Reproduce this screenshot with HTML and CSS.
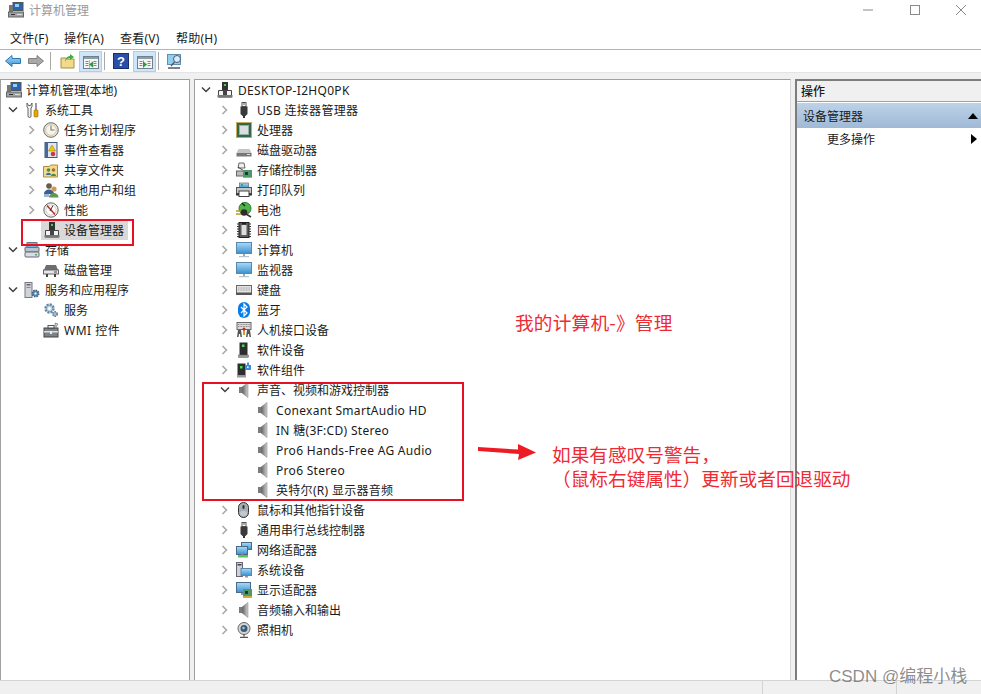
FILE: index.html
```html
<!DOCTYPE html>
<html lang="zh-CN">
<head>
<meta charset="utf-8">
<title>计算机管理</title>
<link rel="stylesheet" href="styles.css">
</head>
<body>
<svg class="defs" xmlns="http://www.w3.org/2000/svg">
<defs>
<linearGradient id="gb" x1="0" y1="0" x2="0" y2="1"><stop offset="0" stop-color="#a9dcf7"/><stop offset="1" stop-color="#3c8fd0"/></linearGradient>
<linearGradient id="gs" x1="0" y1="0" x2="1" y2="0"><stop offset="0" stop-color="#5e5e5e"/><stop offset="1" stop-color="#d0d0d0"/></linearGradient>
<symbol id="i-mgmt" viewBox="0 0 16 16"><rect x="5" y="0.500" width="10" height="8" fill="#2a62b8" stroke="#555"/><rect x="7" y="2" width="4" height="3" fill="#8fd0f5"/><rect x="1" y="3" width="4" height="8" fill="#777"/><rect x="0.500" y="10" width="15" height="5" fill="#9aa3a8" stroke="#666"/><rect x="3" y="12" width="4" height="1" fill="#333"/><rect x="9" y="12" width="5" height="1" fill="#ddd"/></symbol>
<symbol id="i-tools" viewBox="0 0 16 16"><path d="M3 1v4l1 1v8a1.500 1.500 0 0 0 3 0V6l1-1V1L6.500 3.500h-2z" fill="#eee" stroke="#555" stroke-width=".9"/><rect x="11" y="1" width="2" height="7" fill="#999"/><rect x="10" y="8" width="4" height="7" rx="1" fill="#e8a800" stroke="#8a6400" stroke-width=".6"/></symbol>
<symbol id="i-clock" viewBox="0 0 16 16"><circle cx="8" cy="8" r="7.300" fill="#ece7d6" stroke="#6c6c6c"/><circle cx="8" cy="8" r="5.300" fill="#f8f5e8" stroke="#b8b098" stroke-width=".6"/><path d="M8 3.500V8h3.500" fill="none" stroke="#777" stroke-width="1.100"/></symbol>
<symbol id="i-event" viewBox="0 0 16 16"><rect x="2" y="0.500" width="12" height="15" fill="#dfe6f0" stroke="#44597f"/><rect x="2" y="0.500" width="3" height="15" fill="#44699f"/><path d="M9 3l3.500 6h-7z" fill="#f2c811" stroke="#8c7100" stroke-width=".5"/><circle cx="10" cy="12" r="2.300" fill="#c8384a"/></symbol>
<symbol id="i-share" viewBox="0 0 16 16"><path d="M.5 4.500V15h14V3h-7l-1 1.500z" fill="#f3d98d" stroke="#a98f3f"/><circle cx="5.500" cy="8" r="1.800" fill="#4c8a3c"/><path d="M3 13c0-3 5-3 5 0z" fill="#3c6fa0"/><circle cx="10.500" cy="8" r="1.800" fill="#a56a3c"/><path d="M8 14c0-3 5-3 5 0z" fill="#4c8a3c"/></symbol>
<symbol id="i-users" viewBox="0 0 16 16"><circle cx="6" cy="4" r="2.800" fill="#6c5a48"/><path d="M1 12c0-6 10-6 10 0z" fill="#3d5f8e"/><circle cx="11" cy="7" r="2.600" fill="#c99a60"/><path d="M6 15.500c0-6 9.500-6 9.500 0z" fill="#5f9a4a"/><rect x="1" y="12" width="5" height="3" fill="#9ab6d4"/></symbol>
<symbol id="i-perf" viewBox="0 0 16 16"><circle cx="8" cy="8" r="7.200" fill="#f4f0e6" stroke="#666"/><circle cx="8" cy="8" r="5" fill="#fff" stroke="#aaa" stroke-width=".5"/><path d="M4 3.500l8 9" stroke="#c8242c" stroke-width="1.500"/><path d="M10 3.500 7 9" stroke="#333" stroke-width="1"/></symbol>
<symbol id="i-host" viewBox="0 0 16 16"><rect x="5" y="0" width="6" height="9" fill="#333"/><rect x="7" y="2" width="2" height="2" fill="#3fd44a"/><path d="M1.500 8.500h13v6.500h-13z" fill="#f4f4f4" stroke="#444"/><rect x="0.500" y="13" width="15" height="2.500" fill="#777"/><rect x="6" y="8" width="4" height="5" fill="#444"/></symbol>
<symbol id="i-storage" viewBox="0 0 16 16"><rect x="1" y="5" width="14" height="5" rx="1" fill="#b8c4cf" stroke="#667"/><rect x="1" y="10" width="14" height="5" rx="1" fill="#d8dfe4" stroke="#667"/><rect x="3" y="0.500" width="10" height="5" fill="#6fb4dc" stroke="#678"/><rect x="11" y="12" width="2" height="1.500" fill="#3fb04a"/></symbol>
<symbol id="i-disk" viewBox="0 0 16 16"><path d="M3 3h10l2 5H1z" fill="#6e6e6e"/><rect x="0.500" y="8" width="15" height="4" fill="#e8e8e8" stroke="#666"/><path d="M3 12h2v3H3zM11 12h2v3h-2z" fill="#444"/><rect x="11" y="9.500" width="3" height="1" fill="#444"/></symbol>
<symbol id="i-svc" viewBox="0 0 16 16"><rect x="1" y="0.500" width="7" height="15" fill="#d0d4d8" stroke="#778"/><rect x="2.500" y="2" width="4" height="1.500" fill="#666"/><rect x="2.500" y="5" width="4" height="1" fill="#888"/><circle cx="11.500" cy="11.500" r="3" fill="#6f94b8" stroke="#3c5f80" stroke-width="2" stroke-dasharray="1.500 .8"/><circle cx="11.500" cy="11.500" r="1" fill="#fff"/></symbol>
<symbol id="i-gear" viewBox="0 0 16 16"><circle cx="6.500" cy="6.500" r="4" fill="#b9cfe0" stroke="#5f84a4" stroke-width="2.400" stroke-dasharray="2 1.100"/><circle cx="6.500" cy="6.500" r="1.500" fill="#fff"/><circle cx="12" cy="12" r="2.200" fill="#a8bccc" stroke="#64809a" stroke-width="1.600" stroke-dasharray="1.400 .8"/></symbol>
<symbol id="i-wmi" viewBox="0 0 16 16"><rect x="1" y="6" width="14" height="9" fill="#7c8289" stroke="#444"/><rect x="1" y="9" width="14" height="1.500" fill="#ddd"/><rect x="5" y="3.500" width="6" height="3" fill="none" stroke="#555"/><path d="M12 1l3 1-3 5z" fill="#ccc" stroke="#555" stroke-width=".5"/><rect x="7" y="9" width="2" height="3" fill="#eee"/></symbol>
<symbol id="i-usb" viewBox="0 0 16 16"><rect x="6" y="0.500" width="4" height="4" fill="#fff" stroke="#555"/><rect x="7" y="1.500" width="2" height="1" fill="#555"/><path d="M4.500 4.500h7V12l-2 2h-3l-2-2z" fill="#3a3a3a"/><rect x="7" y="14" width="2" height="2" fill="#333"/></symbol>
<symbol id="i-cpu" viewBox="0 0 16 16"><rect x="0" y="0" width="16" height="16" fill="#c7a860"/><rect x="1" y="1" width="14" height="14" fill="#2f6a45"/><rect x="3.500" y="3.500" width="9" height="9" fill="#d9dee0" stroke="#9aa"/></symbol>
<symbol id="i-hdd" viewBox="0 0 16 16"><path d="M2.500 7h11l2 4h-15z" fill="#c4c4c4"/><rect x="0.500" y="11" width="15" height="3.500" fill="#777"/><rect x="11" y="12" width="3" height="1" fill="#e0e0e0"/></symbol>
<symbol id="i-sctrl" viewBox="0 0 16 16"><path d="M3 1h5l1 5H2z" fill="#eee" stroke="#444" stroke-width=".8"/><path d="M2 5l6 4" stroke="#444"/><rect x="0.500" y="9" width="9" height="5" fill="#bbb" stroke="#666"/><rect x="7" y="8" width="9" height="7" fill="#4d9a66"/><rect x="9" y="10" width="3" height="3" fill="#234"/><rect x="7" y="15" width="9" height="1" fill="#d2a83a"/></symbol>
<symbol id="i-print" viewBox="0 0 16 16"><rect x="3.500" y="1" width="9" height="5" fill="url(#gb)" stroke="#555" stroke-width=".6"/><path d="M5 2h2v2H5z" fill="#4fa04f"/><rect x="0.500" y="5.500" width="15" height="6" fill="#c4c8cc" stroke="#555"/><rect x="3" y="9" width="10" height="5.500" fill="#fff" stroke="#444"/><rect x="0" y="11.500" width="3" height="2" fill="#333"/><rect x="13" y="11.500" width="3" height="2" fill="#333"/></symbol>
<symbol id="i-batt" viewBox="0 0 16 16"><circle cx="9" cy="6.500" r="6" fill="#4fb44a" stroke="#267a2a"/><path d="M6 1l3 3" stroke="#222" stroke-width="1.500"/><path d="M0 9h5M0 12h5" stroke="#b89a30" stroke-width="1.300"/><circle cx="8" cy="10.500" r="3.300" fill="#2d2d2d"/><path d="M10 12l5 3" stroke="#333" stroke-width="1.500"/></symbol>
<symbol id="i-chip" viewBox="0 0 16 16"><rect x="3" y="0.500" width="10" height="15" fill="#5a5a5a" stroke="#222"/><rect x="5.500" y="3" width="5" height="10" fill="#ddd"/><path d="M1 2h2M1 4.500h2M1 7h2M1 9.500h2M1 12h2M1 14.500h2M13 2h2M13 4.500h2M13 7h2M13 9.500h2M13 12h2M13 14.500h2" stroke="#333"/><path d="M6 .5h4v2H6z" fill="#222"/></symbol>
<symbol id="i-pc" viewBox="0 0 16 16"><rect x="0.500" y="0.500" width="15" height="11" fill="url(#gb)" stroke="#5c87ad"/><rect x="7" y="12" width="2" height="2" fill="#9ab"/><rect x="3" y="14" width="10" height="1.200" fill="#b8c4cc"/></symbol>
<symbol id="i-kbd" viewBox="0 0 16 16"><rect x="0.500" y="3.500" width="15" height="9" fill="#e4e4e4" stroke="#666"/><path d="M2 6h12M2 8h12" stroke="#9a9a9a" stroke-dasharray="1 .6"/><rect x="0.500" y="10.500" width="15" height="2.500" fill="#555"/></symbol>
<symbol id="i-bt" viewBox="0 0 16 16"><rect x="2" y="0" width="12" height="16" rx="6" fill="#0a7ce8"/><path d="M5 5l6 6-3 3V2l3 3-6 6" fill="none" stroke="#fff" stroke-width="1.200"/></symbol>
<symbol id="i-hid" viewBox="0 0 16 16"><rect x="1" y="0.500" width="14" height="7" fill="#dcdcdc" stroke="#666"/><path d="M2 2.500h12M2 4.500h12" stroke="#888" stroke-dasharray="1 .6"/><path d="M1 15l1-7h3l1 7H4.500L4 12H3l-.5 3z" fill="#555"/><path d="M10 15l1-7h3l1 7h-1.500L13 12h-1l-.5 3z" fill="#555"/><rect x="7" y="7" width="2" height="6" fill="#c8a040"/><circle cx="8" cy="7" r="1.500" fill="#c23"/></symbol>
<symbol id="i-sw" viewBox="0 0 16 16"><rect x="3.500" y="0.500" width="8" height="14" fill="#2e2e2e"/><rect x="6" y="2.500" width="2.500" height="2.500" fill="#3fe04a"/><rect x="2.500" y="13" width="10" height="2.500" fill="#9a9a9a" stroke="#666" stroke-width=".5"/></symbol>
<symbol id="i-swc" viewBox="0 0 16 16"><rect x="1.500" y="1.500" width="8" height="13" fill="#2e2e2e"/><rect x="4" y="4" width="2.500" height="2.500" fill="#3fe04a"/><rect x="1" y="13" width="9" height="2.500" fill="#9a9a9a"/><rect x="9" y="3" width="6" height="5" fill="#3f8fd8"/><rect x="11" y="0.500" width="2" height="3" fill="#3f8fd8"/><rect x="11" y="4.500" width="1.500" height="1.500" fill="#fff"/></symbol>
<symbol id="i-spk" viewBox="0 0 16 16"><rect x="3" y="5" width="3.200" height="6" fill="#7a7a7a"/><path d="M6 5l6-4.500v15L6 11z" fill="url(#gs)" stroke="#808080" stroke-width=".5"/></symbol>
<symbol id="i-mouse" viewBox="0 0 16 16"><rect x="2.500" y="0.500" width="10" height="15" rx="5" fill="#a5adb5" stroke="#333"/><rect x="6.500" y="3" width="2" height="4" rx="1" fill="#333"/><rect x="4" y="9" width="7" height="5" rx="2.500" fill="#c4c9ce"/></symbol>
<symbol id="i-net" viewBox="0 0 16 16"><rect x="5.500" y="0.500" width="10" height="7" fill="url(#gb)" stroke="#4a6a8a"/><rect x="0.500" y="4.500" width="11" height="8" fill="url(#gb)" stroke="#4a6a8a"/><rect x="2" y="13" width="10" height="2.500" fill="#58c558"/><rect x="5" y="12" width="2" height="2" fill="#88a"/></symbol>
<symbol id="i-sys" viewBox="0 0 16 16"><rect x="0.500" y="0.500" width="6" height="14" fill="#ced2d6" stroke="#667"/><rect x="1.500" y="2" width="4" height="1.500" fill="#444"/><rect x="5" y="6.500" width="10.500" height="7" fill="url(#gb)" stroke="#5c87ad"/><rect x="9" y="14" width="3" height="1.500" fill="#89a"/></symbol>
<symbol id="i-disp" viewBox="0 0 16 16"><rect x="0.500" y="0.500" width="14" height="10" fill="url(#gb)" stroke="#4a6a8a"/><rect x="5" y="11" width="4" height="2" fill="#89a"/><rect x="7" y="7" width="9" height="7" fill="#4d9a66"/><rect x="9" y="9" width="3" height="3" fill="#234"/><rect x="7" y="14" width="9" height="2" fill="#d2a83a"/></symbol>
<symbol id="i-cam" viewBox="0 0 16 16"><circle cx="8" cy="6.500" r="6" fill="#d6d6d6" stroke="#666"/><circle cx="8" cy="6.500" r="3.500" fill="#3c5a78"/><circle cx="7.500" cy="6" r="1.300" fill="#9cc4e4"/><path d="M8 12.500v2M4 15.500h8" stroke="#555" stroke-width="1.300"/></symbol>
<symbol id="i-right" viewBox="0 0 8 10"><path d="M1.500 1l4 4-4 4" fill="none" stroke="#a6a6a6" stroke-width="1.500"/></symbol>
<symbol id="i-down" viewBox="0 0 10 8"><path d="M1 1.500l4 4 4-4" fill="none" stroke="#404040" stroke-width="1.500"/></symbol>
<symbol id="i-pane" viewBox="0 0 16 13"><rect x="0.500" y="0.500" width="15" height="12" fill="#f6f6f6" stroke="#70808c"/><rect x="1" y="1" width="14" height="2" fill="#8e9ca6"/><path d="M2.500 5.500h3M2.500 7.500h3M2.500 9.500h3M10.500 5.500h3M10.500 7.500h3M10.500 9.500h3" stroke="#7a8894"/><path d="M6.500 4v8" stroke="#b0bac2"/></symbol>
</defs>
</svg>

<div class="window">
  <header class="titlebar">
    <div class="title-left">
      <svg class="ic"><use href="#i-mgmt"/></svg>
      <span class="title-text">计算机管理</span>
    </div>
    <div class="winctrl">
      <svg class="wc" viewBox="0 0 12 12"><path d="M1 6h10" stroke="#8a8a8a"/></svg>
      <svg class="wc wc-max" viewBox="0 0 12 12"><rect x="1.500" y="1.500" width="9" height="9" fill="none" stroke="#8a8a8a"/></svg>
      <svg class="wc" viewBox="0 0 12 12"><path d="M1 1l10 10M11 1L1 11" stroke="#8a8a8a"/></svg>
    </div>
  </header>

  <nav class="menubar">
    <span class="menu menu-first">文件(F)</span>
    <span class="menu">操作(A)</span>
    <span class="menu">查看(V)</span>
    <span class="menu">帮助(H)</span>
  </nav>

  <div class="toolbar">
    <svg class="tool" viewBox="0 0 16 16"><path d="M.5 8L7 2.500V5.500h8.500v5H7v3z" fill="url(#gb)" stroke="#2a79b8"/></svg>
    <svg class="tool tool-fwd" viewBox="0 0 16 16"><path d="M15.500 8L9 2.500V5.500H.5v5H9v3z" fill="#a8a8a8" stroke="#808080"/></svg>
    <span class="tsep tsep-a"></span>
    <svg class="tool tool-up" viewBox="0 0 16 16"><path d="M1 5h5l1 1h7v9H1z" fill="#f3d98d" stroke="#a98f3f"/><path d="M5 9c0-4 3-6 5-6V1l4 3-4 3V5c-2 0-4 1-5 4z" fill="#3fae3f"/></svg>
    <span class="tbtn"><svg class="pane-ic"><use href="#i-pane"/></svg><svg class="tri" viewBox="0 0 6 8"><path d="M5 0v8L0 4z" fill="#2f9a3f"/></svg></span>
    <span class="tsep tsep-b"></span>
    <svg class="tool tool-help" viewBox="0 0 16 16"><rect x="0.500" y="0.500" width="15" height="15" fill="#2a4fa8" stroke="#1a2f70"/><text x="8" y="13" class="qm">?</text></svg>
    <span class="tbtn tbtn-b"><svg class="pane-ic"><use href="#i-pane"/></svg><svg class="tri" viewBox="0 0 6 8"><path d="M0 0v8l5-4z" fill="#2f9a3f"/></svg></span>
    <span class="tsep tsep-c"></span>
    <svg class="tool tool-view" viewBox="0 0 16 16"><rect x="0.500" y="1.500" width="13" height="10" fill="#8fd0f0" stroke="#5f8fb0"/><circle cx="10" cy="6" r="3.500" fill="#d5eefa" stroke="#557"/><path d="M7.500 9L4 13M1 15h12" stroke="#556" stroke-width="1.300"/></svg>
  </div>

  <main class="panes">
    <section class="pane pane-left">
      <div class="row ind-l0"><svg class="ic"><use href="#i-mgmt"/></svg><span class="lbl">计算机管理(本地)</span></div>
      <div class="row ind-l1"><svg class="chev chev-d"><use href="#i-down"/></svg><svg class="ic"><use href="#i-tools"/></svg><span class="lbl">系统工具</span></div>
      <div class="row ind-l2"><svg class="chev"><use href="#i-right"/></svg><svg class="ic"><use href="#i-clock"/></svg><span class="lbl">任务计划程序</span></div>
      <div class="row ind-l2"><svg class="chev"><use href="#i-right"/></svg><svg class="ic"><use href="#i-event"/></svg><span class="lbl">事件查看器</span></div>
      <div class="row ind-l2"><svg class="chev"><use href="#i-right"/></svg><svg class="ic"><use href="#i-share"/></svg><span class="lbl">共享文件夹</span></div>
      <div class="row ind-l2"><svg class="chev"><use href="#i-right"/></svg><svg class="ic"><use href="#i-users"/></svg><span class="lbl">本地用户和组</span></div>
      <div class="row ind-l2"><svg class="chev"><use href="#i-right"/></svg><svg class="ic"><use href="#i-perf"/></svg><span class="lbl">性能</span></div>
      <div class="row ind-l2 nochev"><span class="selected"><svg class="ic"><use href="#i-host"/></svg><span class="lbl">设备管理器</span></span></div>
      <div class="row ind-l1"><svg class="chev chev-d"><use href="#i-down"/></svg><svg class="ic"><use href="#i-storage"/></svg><span class="lbl">存储</span></div>
      <div class="row ind-l2 nochev"><svg class="ic"><use href="#i-disk"/></svg><span class="lbl">磁盘管理</span></div>
      <div class="row ind-l1"><svg class="chev chev-d"><use href="#i-down"/></svg><svg class="ic"><use href="#i-svc"/></svg><span class="lbl">服务和应用程序</span></div>
      <div class="row ind-l2 nochev"><svg class="ic"><use href="#i-gear"/></svg><span class="lbl">服务</span></div>
      <div class="row ind-l2 nochev"><svg class="ic"><use href="#i-wmi"/></svg><span class="lbl wider">WMI 控件</span></div>
    </section>

    <section class="pane pane-center">
      <div class="row ind-c0"><svg class="chev chev-d"><use href="#i-down"/></svg><svg class="ic"><use href="#i-host"/></svg><span class="lbl wide">DESKTOP-I2HQ0PK</span></div>
      <div class="row ind-c1"><svg class="chev"><use href="#i-right"/></svg><svg class="ic"><use href="#i-usb"/></svg><span class="lbl wide">USB 连接器管理器</span></div>
      <div class="row ind-c1"><svg class="chev"><use href="#i-right"/></svg><svg class="ic"><use href="#i-cpu"/></svg><span class="lbl">处理器</span></div>
      <div class="row ind-c1"><svg class="chev"><use href="#i-right"/></svg><svg class="ic"><use href="#i-hdd"/></svg><span class="lbl">磁盘驱动器</span></div>
      <div class="row ind-c1"><svg class="chev"><use href="#i-right"/></svg><svg class="ic"><use href="#i-sctrl"/></svg><span class="lbl">存储控制器</span></div>
      <div class="row ind-c1"><svg class="chev"><use href="#i-right"/></svg><svg class="ic"><use href="#i-print"/></svg><span class="lbl">打印队列</span></div>
      <div class="row ind-c1"><svg class="chev"><use href="#i-right"/></svg><svg class="ic"><use href="#i-batt"/></svg><span class="lbl">电池</span></div>
      <div class="row ind-c1"><svg class="chev"><use href="#i-right"/></svg><svg class="ic"><use href="#i-chip"/></svg><span class="lbl">固件</span></div>
      <div class="row ind-c1"><svg class="chev"><use href="#i-right"/></svg><svg class="ic"><use href="#i-pc"/></svg><span class="lbl">计算机</span></div>
      <div class="row ind-c1"><svg class="chev"><use href="#i-right"/></svg><svg class="ic"><use href="#i-pc"/></svg><span class="lbl">监视器</span></div>
      <div class="row ind-c1"><svg class="chev"><use href="#i-right"/></svg><svg class="ic"><use href="#i-kbd"/></svg><span class="lbl">键盘</span></div>
      <div class="row ind-c1"><svg class="chev"><use href="#i-right"/></svg><svg class="ic"><use href="#i-bt"/></svg><span class="lbl">蓝牙</span></div>
      <div class="row ind-c1"><svg class="chev"><use href="#i-right"/></svg><svg class="ic"><use href="#i-hid"/></svg><span class="lbl">人机接口设备</span></div>
      <div class="row ind-c1"><svg class="chev"><use href="#i-right"/></svg><svg class="ic"><use href="#i-sw"/></svg><span class="lbl">软件设备</span></div>
      <div class="row ind-c1"><svg class="chev"><use href="#i-right"/></svg><svg class="ic"><use href="#i-swc"/></svg><span class="lbl">软件组件</span></div>
      <div class="row ind-c1"><svg class="chev chev-d"><use href="#i-down"/></svg><svg class="ic"><use href="#i-spk"/></svg><span class="lbl">声音、视频和游戏控制器</span></div>
      <div class="row ind-c2"><svg class="ic"><use href="#i-spk"/></svg><span class="lbl wide">Conexant SmartAudio HD</span></div>
      <div class="row ind-c2"><svg class="ic"><use href="#i-spk"/></svg><span class="lbl wide">IN 糖(3F:CD) Stereo</span></div>
      <div class="row ind-c2"><svg class="ic"><use href="#i-spk"/></svg><span class="lbl wide">Pro6 Hands-Free AG Audio</span></div>
      <div class="row ind-c2"><svg class="ic"><use href="#i-spk"/></svg><span class="lbl wide">Pro6 Stereo</span></div>
      <div class="row ind-c2"><svg class="ic"><use href="#i-spk"/></svg><span class="lbl wide">英特尔(R) 显示器音频</span></div>
      <div class="row ind-c1"><svg class="chev"><use href="#i-right"/></svg><svg class="ic"><use href="#i-mouse"/></svg><span class="lbl">鼠标和其他指针设备</span></div>
      <div class="row ind-c1"><svg class="chev"><use href="#i-right"/></svg><svg class="ic"><use href="#i-usb"/></svg><span class="lbl">通用串行总线控制器</span></div>
      <div class="row ind-c1"><svg class="chev"><use href="#i-right"/></svg><svg class="ic"><use href="#i-net"/></svg><span class="lbl">网络适配器</span></div>
      <div class="row ind-c1"><svg class="chev"><use href="#i-right"/></svg><svg class="ic"><use href="#i-sys"/></svg><span class="lbl">系统设备</span></div>
      <div class="row ind-c1"><svg class="chev"><use href="#i-right"/></svg><svg class="ic"><use href="#i-disp"/></svg><span class="lbl">显示适配器</span></div>
      <div class="row ind-c1"><svg class="chev"><use href="#i-right"/></svg><svg class="ic"><use href="#i-spk"/></svg><span class="lbl">音频输入和输出</span></div>
      <div class="row ind-c1"><svg class="chev"><use href="#i-right"/></svg><svg class="ic"><use href="#i-cam"/></svg><span class="lbl">照相机</span></div>
    </section>

    <aside class="pane pane-right">
      <div class="act-head">操作</div>
      <div class="act-section"><span>设备管理器</span><svg class="act-tri" viewBox="0 0 10 6"><path d="M0 6L5 0l5 6z" fill="#000"/></svg></div>
      <div class="act-item"><span>更多操作</span><svg class="act-tri act-tri-r" viewBox="0 0 6 10"><path d="M0 0l6 5-6 5z" fill="#000"/></svg></div>
    </aside>
  </main>

  <footer class="status">
    <span class="st st-a"></span>
    <span class="st st-b"></span>
    <span class="st st-c"></span>
  </footer>

  <div class="mark mark-dev"></div>
  <div class="mark mark-snd"></div>
  <div class="note note-1">我的计算机-》管理</div>
  <svg class="arrow" viewBox="0 0 60 20"><path d="M0 5L40 7.500 40 2 58 10.500 40 18 41 12 0 9z" fill="#ed1c24"/></svg>
  <div class="note note-2">如果有感叹号警告，<br>（鼠标右键属性）更新或者回退驱动</div>
  <div class="watermark">CSDN @编程小栈</div>
</div>
</body>
</html>
```

FILE: styles.css
```css
* { box-sizing: border-box; }
html, body { margin: 0; padding: 0; background: #fff; }
body {
  font-family: "Noto Sans", "Noto Sans CJK SC", "Liberation Sans", sans-serif;
  font-size: 12px;
  color: #1a1a1a;
  overflow: hidden;
}
.defs { position: absolute; width: 0; height: 0; }
.window {
  position: relative;
  width: 981px;
  height: 694px;
  display: flex;
  flex-direction: column;
  overflow: hidden;
}

/* title bar */
.titlebar {
  height: 26px;
  flex: none;
  display: flex;
  justify-content: space-between;
  align-items: flex-start;
  background: #fff;
}
.title-left { display: flex; align-items: center; height: 20px; padding-left: 8px; }
.title-text { margin-left: 5px; padding-top: 2px; color: #999; line-height: 20px; }
.winctrl { display: flex; padding: 4px 14px 0 0; }
.wc { width: 12px; height: 12px; margin-left: 34px; display: block; }
.wc-max { margin-left: 35px; }

/* menu */
.menubar {
  height: 24px;
  flex: none;
  display: flex;
  padding-left: 10px;
  align-items: center;
  border-bottom: 1px solid #b4b4b4;
  background: #fff;
}
.menu { line-height: 20px; padding-top: 2px; width: 56px; letter-spacing: .25px; }
.menu-first { width: 54px; }

/* toolbar */
.toolbar {
  height: 23px;
  flex: none;
  display: flex;
  align-items: center;
  padding-left: 5px;
  background: #fff;
  border-bottom: 1px solid #e4e4e4;
}
.tool { width: 16px; height: 16px; display: block; flex: none; }
.tool-fwd { margin-left: 7px; }
.tool-up { margin-left: 9px; }
.tool-help { margin-left: 8px; }
.tool-view { margin-left: 8px; }
.tsep { width: 1px; height: 18px; background: #a8a8a8; flex: none; margin-left: 6px; }
.tsep-b { margin-left: 2px; }
.tsep-c { margin-left: 2px; }
.tbtn {
  position: relative;
  width: 23px;
  height: 21px;
  margin-left: 3px;
  flex: none;
  background: #cfe6fa;
  border: 1px solid #a8d0f0;
  display: flex;
  align-items: flex-end;
  justify-content: center;
  padding-bottom: 2px;
}
.tbtn-b { margin-left: 4px; }
.pane-ic { width: 16px; height: 13px; display: block; }
.tri { position: absolute; left: 9px; top: 9px; width: 5px; height: 7px; }
.qm { font: bold 13px "Liberation Sans", sans-serif; fill: #fff; text-anchor: middle; }

/* panes */
.panes {
  flex: none;
  height: 607px;
  display: flex;
  background: #f0f0f0;
  padding-top: 6px;
}
.pane {
  background: #fff;
  border-top: 1px solid #a0a0a0;
  height: 601px;
  overflow: hidden;
}
.pane-left { width: 190px; border-right: 1px solid #a0a0a0; border-left: 1px solid #a0a0a0; }
.pane-center {
  width: 597px;
  margin-left: 4px;
  border-left: 1px solid #a0a0a0;
  border-right: 1px solid #d8d8d8;
}
.pane-right {
  width: 186px;
  margin-left: 4px;
  border-left: 2px solid #7c7c7c;
  border-top: 2px solid #7c7c7c;
}

/* tree rows */
.row { height: 20px; display: flex; align-items: center; white-space: nowrap; }
.ic { width: 16px; height: 16px; display: block; flex: none; }
.lbl { margin-left: 5px; line-height: 18px; padding-top: 2px; }
.wide { letter-spacing: .3px; }
.wider { letter-spacing: .5px; }
.chev { width: 8px; height: 10px; display: block; flex: none; }
.chev-d { width: 10px; height: 8px; margin-left: -1px; margin-right: -1px; }
.ind-l0 { padding-left: 5px; }
.ind-l0 .ic { margin-right: -1px; }
.ind-l1 { padding-left: 8px; }
.ind-l1 .ic { margin-left: 7px; }
.ind-l2 { padding-left: 27px; }
.ind-l2 .ic { margin-left: 7px; }
.nochev { padding-left: 35px; }
.selected {
  display: flex;
  align-items: center;
  height: 20px;
  width: 87px;
  margin-left: 5px;
  background: #d9d9d9;
}
.ind-l2 .selected .ic { margin-left: 3px; }
.selected .lbl { margin-left: 4px; }
.ind-c0 { padding-left: 7px; }
.ind-c0 .ic { margin-left: 7px; }
.ind-c1 { padding-left: 26px; }
.ind-c1 .ic { margin-left: 7px; }
.ind-c2 { padding-left: 60px; }

/* actions pane */
.act-head {
  height: 21px;
  background: #f0f0f0;
  border-bottom: 1px solid #a0a0a0;
  padding-left: 4px;
  line-height: 22px;
  font-weight: 500;
}
.act-section {
  height: 25px;
  margin-top: 1px;
  padding: 0 3px 0 6px;
  display: flex;
  justify-content: space-between;
  align-items: center;
  background: linear-gradient(#bcd2e8, #a0b9d6);
}
.act-item {
  height: 22px;
  padding: 0 4px 0 30px;
  display: flex;
  justify-content: space-between;
  align-items: center;
}
.act-tri { width: 10px; height: 6px; display: block; }
.act-tri-r { width: 6px; height: 10px; }

/* status bar */
.status {
  flex: 1;
  display: flex;
  background: #f0f0f0;
  border-top: 1px solid #d4d4d4;
}
.st { display: block; height: 100%; border-right: 1px solid #d4d4d4; }
.st-a { width: 763px; }
.st-b { width: 134px; }
.st-c { flex: 1; border-right: 0; }

/* annotations on top of the screenshot */
.mark { position: absolute; border: 2px solid #e81123; }
.mark-dev { left: 21px; top: 219px; width: 113px; height: 27px; }
.mark-snd { left: 202px; top: 382px; width: 262px; height: 119px; }
.note {
  position: absolute;
  font-size: 18.67px;
  line-height: 24px;
  color: #ee2a35;
  white-space: nowrap;
  font-family: "Noto Sans CJK SC", "Noto Sans", sans-serif;
}
.note-1 { left: 515px; top: 310px; letter-spacing: .2px; }
.note-2 { left: 552px; top: 442px; }
.arrow { position: absolute; left: 478px; top: 442px; width: 60px; height: 20px; }
.watermark {
  position: absolute;
  left: 829px;
  top: 665px;
  font-size: 17px;
  line-height: 24px;
  color: rgba(90, 90, 90, 0.7);
  white-space: nowrap;
  font-family: "Liberation Sans", "Noto Sans CJK SC", sans-serif;
}
```
